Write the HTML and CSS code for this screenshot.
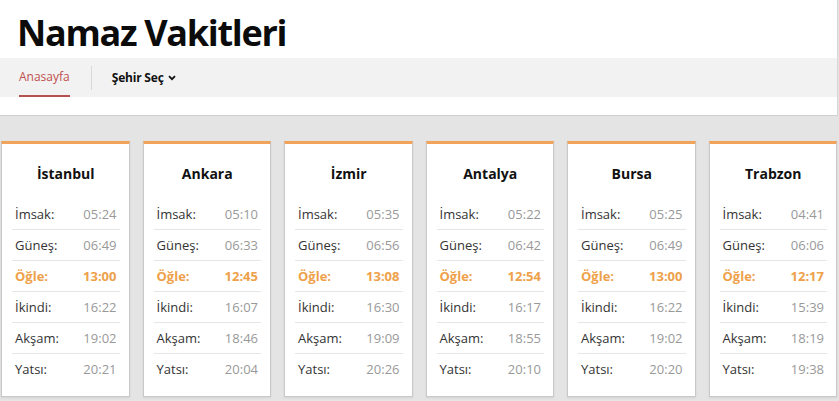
FILE: index.html
```html
<!DOCTYPE html>
<html lang="tr">
<head>
<meta charset="utf-8">
<title>Namaz Vakitleri</title>
<link rel="stylesheet" href="styles.css">
</head>
<body>
<header class="site-header">
  <h1 class="site-title">Namaz Vakitleri</h1>
  <nav class="nav">
    <a class="nav-item active" href="#">Anasayfa</a>
    <span class="nav-sep"></span>
    <a class="nav-item drop" href="#">Şehir Seç
      <svg class="chev" width="8" height="6" viewBox="0 0 8 6"><path d="M1 1.2 4 4.2 7 1.2" fill="none" stroke="#111" stroke-width="1.8"/></svg>
    </a>
  </nav>
</header>
<main class="cards">
  <section class="card">
    <h2 class="city">İstanbul</h2>
    <div class="row"><span>İmsak:</span><span class="t">05:24</span></div>
    <div class="row"><span>Güneş:</span><span class="t">06:49</span></div>
    <div class="row now"><span>Öğle:</span><span class="t">13:00</span></div>
    <div class="row"><span>İkindi:</span><span class="t">16:22</span></div>
    <div class="row"><span>Akşam:</span><span class="t">19:02</span></div>
    <div class="row"><span>Yatsı:</span><span class="t">20:21</span></div>
  </section>
  <section class="card">
    <h2 class="city">Ankara</h2>
    <div class="row"><span>İmsak:</span><span class="t">05:10</span></div>
    <div class="row"><span>Güneş:</span><span class="t">06:33</span></div>
    <div class="row now"><span>Öğle:</span><span class="t">12:45</span></div>
    <div class="row"><span>İkindi:</span><span class="t">16:07</span></div>
    <div class="row"><span>Akşam:</span><span class="t">18:46</span></div>
    <div class="row"><span>Yatsı:</span><span class="t">20:04</span></div>
  </section>
  <section class="card">
    <h2 class="city">İzmir</h2>
    <div class="row"><span>İmsak:</span><span class="t">05:35</span></div>
    <div class="row"><span>Güneş:</span><span class="t">06:56</span></div>
    <div class="row now"><span>Öğle:</span><span class="t">13:08</span></div>
    <div class="row"><span>İkindi:</span><span class="t">16:30</span></div>
    <div class="row"><span>Akşam:</span><span class="t">19:09</span></div>
    <div class="row"><span>Yatsı:</span><span class="t">20:26</span></div>
  </section>
  <section class="card">
    <h2 class="city">Antalya</h2>
    <div class="row"><span>İmsak:</span><span class="t">05:22</span></div>
    <div class="row"><span>Güneş:</span><span class="t">06:42</span></div>
    <div class="row now"><span>Öğle:</span><span class="t">12:54</span></div>
    <div class="row"><span>İkindi:</span><span class="t">16:17</span></div>
    <div class="row"><span>Akşam:</span><span class="t">18:55</span></div>
    <div class="row"><span>Yatsı:</span><span class="t">20:10</span></div>
  </section>
  <section class="card">
    <h2 class="city">Bursa</h2>
    <div class="row"><span>İmsak:</span><span class="t">05:25</span></div>
    <div class="row"><span>Güneş:</span><span class="t">06:49</span></div>
    <div class="row now"><span>Öğle:</span><span class="t">13:00</span></div>
    <div class="row"><span>İkindi:</span><span class="t">16:22</span></div>
    <div class="row"><span>Akşam:</span><span class="t">19:02</span></div>
    <div class="row"><span>Yatsı:</span><span class="t">20:20</span></div>
  </section>
  <section class="card">
    <h2 class="city">Trabzon</h2>
    <div class="row"><span>İmsak:</span><span class="t">04:41</span></div>
    <div class="row"><span>Güneş:</span><span class="t">06:06</span></div>
    <div class="row now"><span>Öğle:</span><span class="t">12:17</span></div>
    <div class="row"><span>İkindi:</span><span class="t">15:39</span></div>
    <div class="row"><span>Akşam:</span><span class="t">18:19</span></div>
    <div class="row"><span>Yatsı:</span><span class="t">19:38</span></div>
  </section>
</main>
</body>
</html>
```
FILE: styles.css
```css
* { box-sizing: border-box; }
html, body { margin: 0; padding: 0; }
body {
  background: #e4e4e4;
  font-family: "Open Sans", "Noto Sans", sans-serif;
  color: #222;
  height: 401px;
  overflow: hidden;
}
.site-header {
  background: #fff;
  width: 838px;
  height: 116px;
  border-right: 1px solid #d8d8d8;
  border-bottom: 1px solid #cfcfcf;
}
.site-title {
  margin: 0;
  padding: 9px 0 0 17px;
  height: 58px;
  font-size: 36px;
  line-height: 48px;
  font-weight: 700;
  color: #0b0b0b;
  letter-spacing: -1.3px;
}
.nav {
  background: #f2f2f2;
  height: 39px;
  display: flex;
  align-items: center;
  padding-left: 19px;
}
.nav-item {
  font-size: 12px;
  text-decoration: none;
  color: #111;
  height: 39px;
  line-height: 39px;
  display: flex;
  align-items: center;
  gap: 4px;
}
.nav-item.active {
  color: #c0504d;
  border-bottom: 2px solid #b5524f;
  line-height: 37px;
  height: 39px;
}
.nav-item.drop { font-weight: 700; letter-spacing: -0.2px; }
.nav-sep {
  width: 1px;
  height: 24px;
  background: #d9d9d9;
  margin: 0 20px 0 21px;
}
.chev { margin-top: 1px; }
.cards {
  display: flex;
  gap: 13px;
  padding: 25px 2px 0 1px;
}
.card {
  flex: 1 1 0;
  background: #fff;
  border: 1px solid #c9c9c9;
  border-top: 3px solid #f2a35a;
  box-shadow: 0 1px 2px rgba(0,0,0,0.08);
  padding: 0 9px 14px 10px;
  height: 256px;
}
.city {
  margin: 0;
  text-align: center;
  font-size: 14px;
  font-weight: 700;
  color: #111;
  padding: 20px 0 15px;
  line-height: 20px;
}
.row {
  display: flex;
  justify-content: space-between;
  font-size: 13px;
  line-height: 30px;
  height: 31px;
  padding: 0 3px;
  color: #333;
  border-bottom: 1px solid #e6e6e6;
}
.row:last-child { border-bottom: none; }
.row .t { color: #999; }
.row.now, .row.now .t { color: #eea14a; font-weight: 700; }
```
